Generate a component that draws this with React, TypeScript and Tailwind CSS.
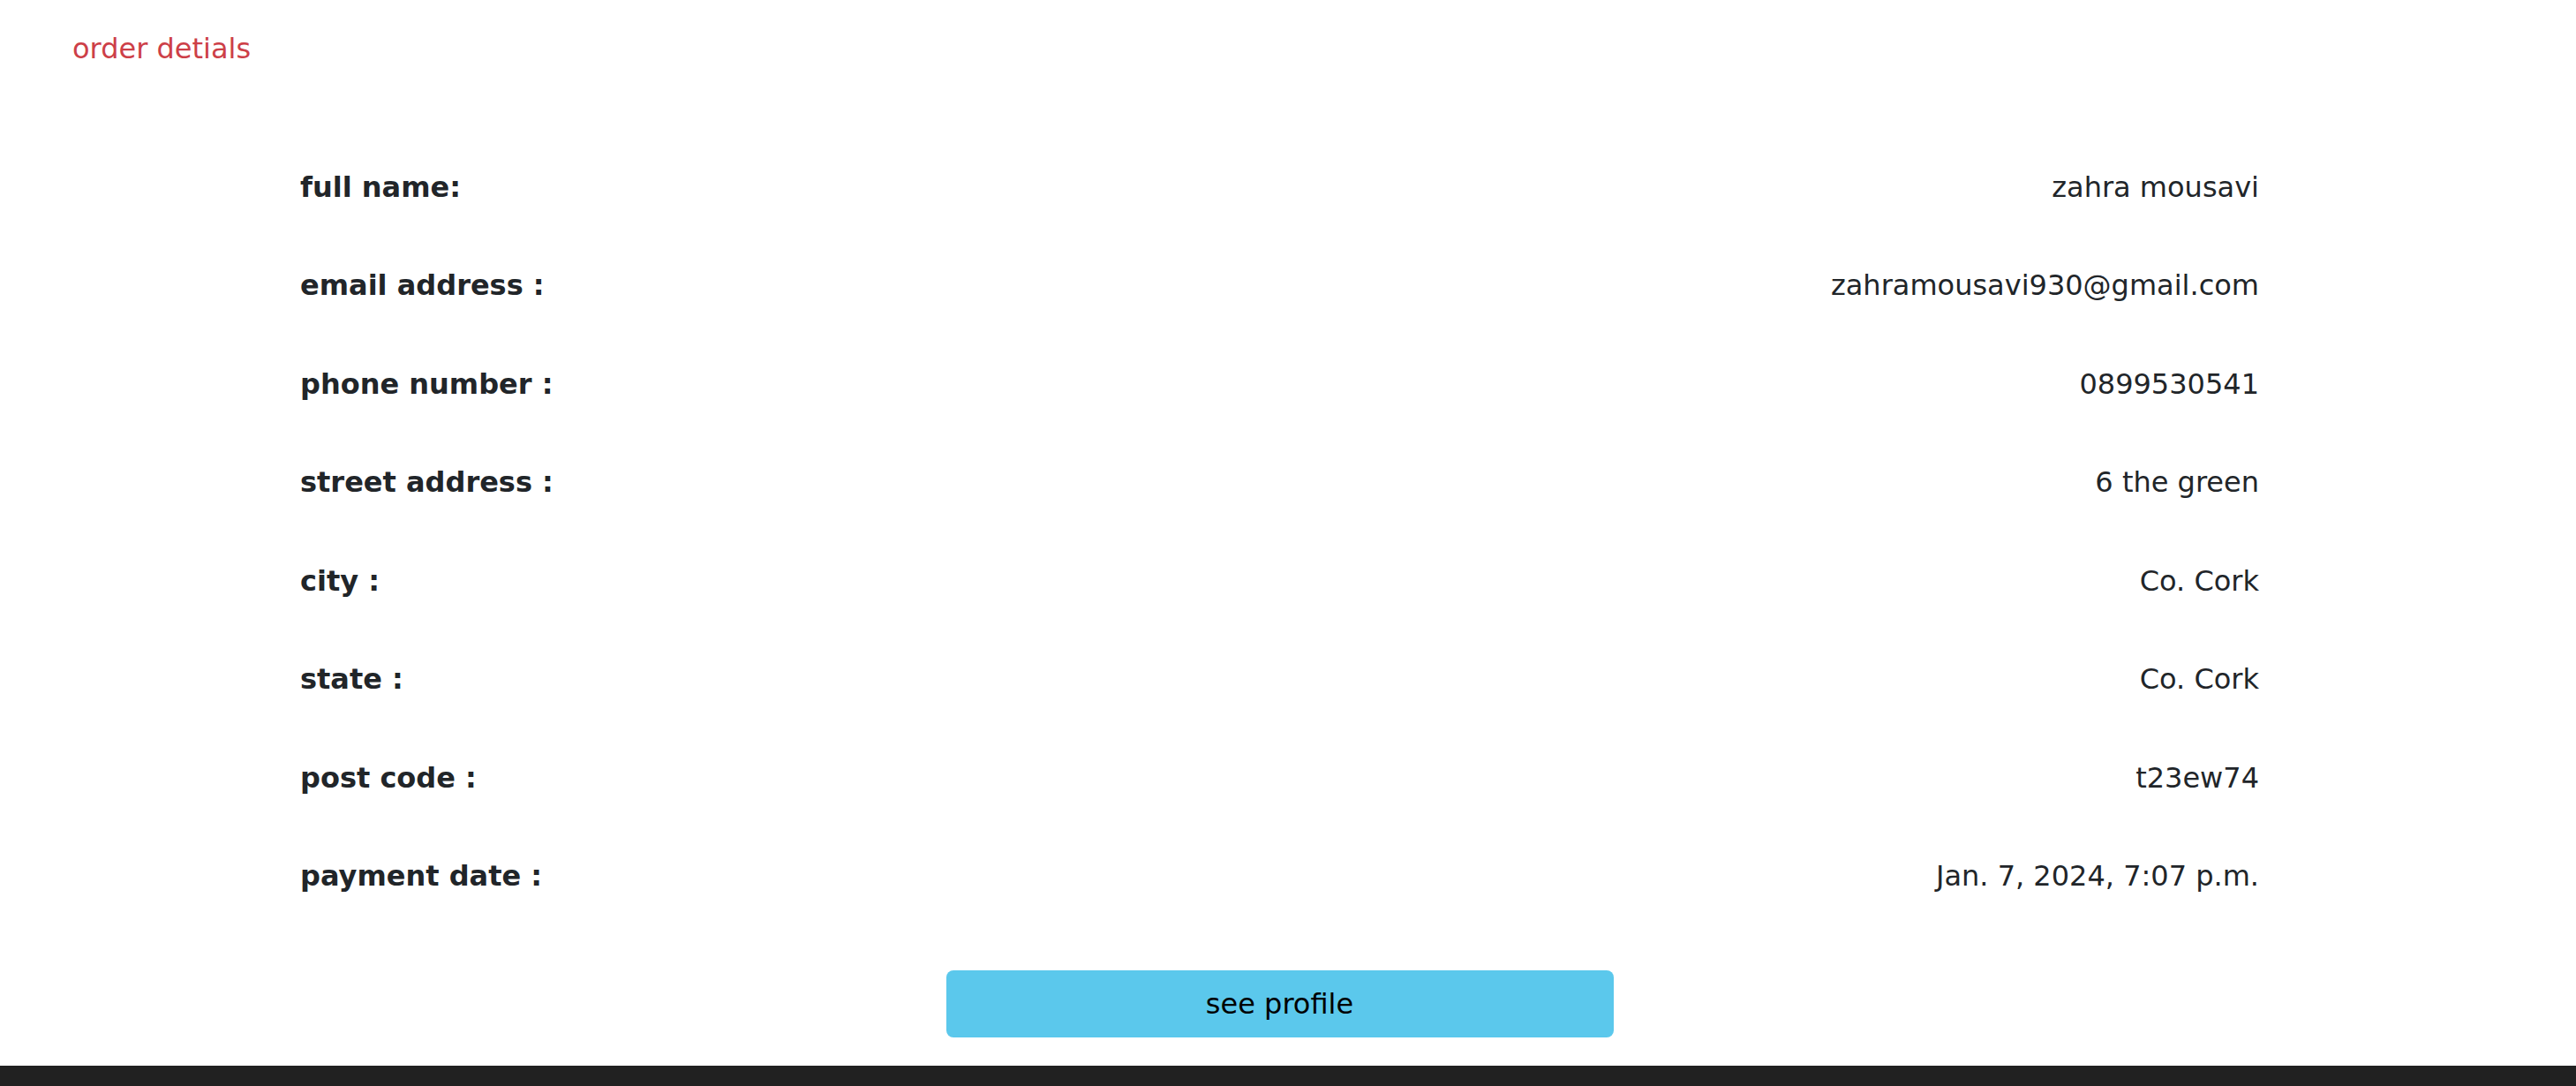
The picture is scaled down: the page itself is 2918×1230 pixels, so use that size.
import React from 'react';

interface DetailRow {
  label: string;
  value: string;
}

const details: DetailRow[] = [
  { label: 'full name:', value: 'zahra mousavi' },
  { label: 'email address :', value: 'zahramousavi930@gmail.com' },
  { label: 'phone number :', value: '0899530541' },
  { label: 'street address :', value: '6 the green' },
  { label: 'city :', value: 'Co. Cork' },
  { label: 'state :', value: 'Co. Cork' },
  { label: 'post code :', value: 't23ew74' },
  { label: 'payment date :', value: 'Jan. 7, 2024, 7:07 p.m.' },
];

const App: React.FC = () => {
  return (
    <div className="min-h-screen bg-white font-['DejaVu_Sans',sans-serif] text-[32px] leading-[48px] text-[#212529]">
      <div className="pl-[82px] pt-[31px]">
        <p className="text-[#cd3f48]">order detials</p>
      </div>

      <div className="ml-[340px] w-[2219px] pt-[77px]">
        {details.map(row => (
          <div key={row.label} className="flex h-[111.5px] items-center justify-between">
            <span className="font-bold">{row.label}</span>
            <span>{row.value}</span>
          </div>
        ))}

        <div className="flex justify-center pt-[51px] pb-[32px]">
          <button className="h-[76px] w-[756px] rounded-[8px] bg-[#5bc8ec] text-black">
            see profile
          </button>
        </div>
      </div>

      <footer className="h-[200px] bg-[#212121]" />
    </div>
  );
};

export default App;
